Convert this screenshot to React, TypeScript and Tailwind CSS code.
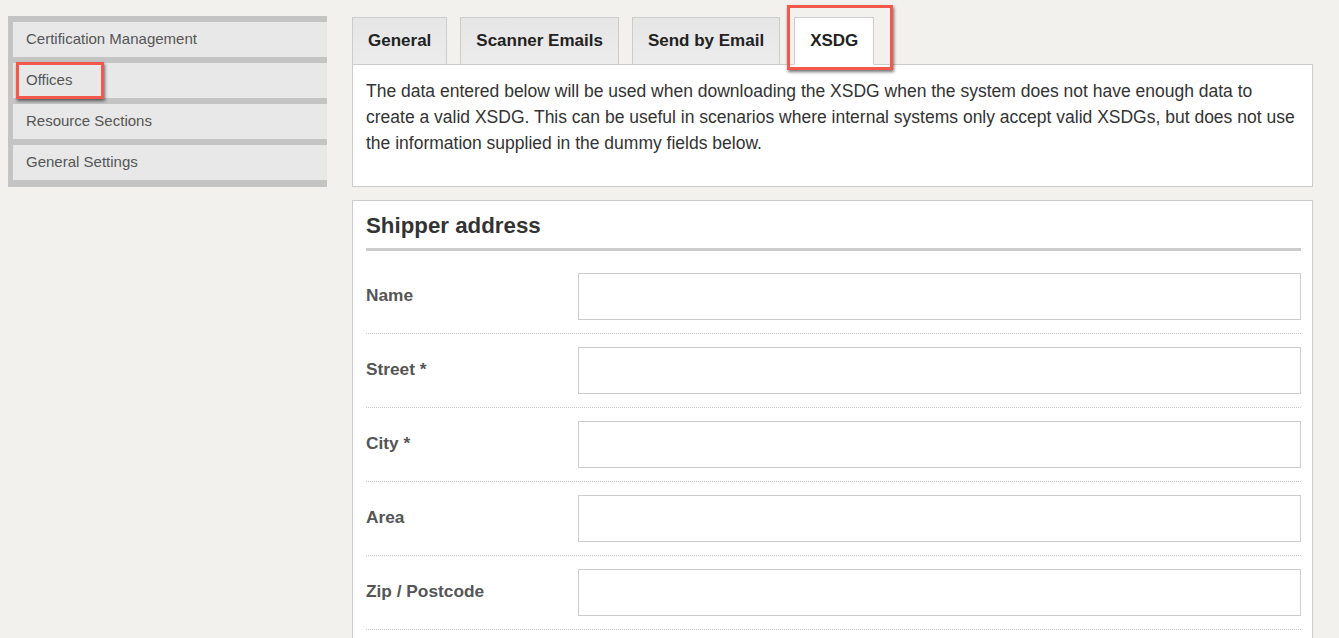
import React from "react";

const font = { fontFamily: '"Liberation Sans", Arial, sans-serif' };

const sideItems = ["Certification Management", "Offices", "Resource Sections", "General Settings"];
const tabs = ["General", "Scanner Emails", "Send by Email", "XSDG"];
const fields = [
  { label: "Name", req: false },
  { label: "Street", req: true },
  { label: "City", req: true },
  { label: "Area", req: false },
  { label: "Zip / Postcode", req: false },
];

export default function App() {
  return (
    <div
      className="w-[1339px] h-[638px] overflow-hidden bg-[#f2f1ee] flex items-start"
      style={font}
    >
      {/* Sidebar */}
      <div className="ml-2 mt-4 w-[319px] bg-[#c4c4c4] pl-[5px] pt-[6px] pb-[7px] flex flex-col gap-[6px]">
        {sideItems.map((s) => (
          <div
            key={s}
            className="relative h-[35px] bg-[#e8e8e8] pl-[13px] flex items-center text-[15px] text-[#555]"
          >
            {s}
            {s === "Offices" && (
              <div className="absolute left-[3px] top-[-1px] w-[88px] h-[37px] border-[3px] border-[#f2584c] shadow-[1px_2px_3px_rgba(0,0,0,0.55)]" />
            )}
          </div>
        ))}
      </div>

      {/* Main */}
      <div className="ml-[25px] mt-[17px] w-[961px] flex flex-col">
        {/* Tabs */}
        <div className="flex gap-[13px] h-[48px] relative z-10">
          {tabs.map((t) => {
            const active = t === "XSDG";
            return (
              <div
                key={t}
                className={
                  "relative h-[48px] px-[15px] flex items-center text-[17px] font-bold text-[#222] border border-[#ccc] " +
                  (active
                    ? "bg-white border-b-white ml-px"
                    : "bg-gradient-to-b from-[#e6e6e6] to-[#ececec]")
                }
              >
                {t}
                {active && (
                  <div className="absolute left-[-8px] top-[-13px] w-[106px] h-[65px] border-[3px] border-[#f2584c] shadow-[1px_2px_3px_rgba(0,0,0,0.55)]" />
                )}
              </div>
            );
          })}
        </div>

        {/* Intro panel */}
        <div className="-mt-px bg-white border border-[#ccc] h-[123px] pl-[13px] pr-[11px] pt-[13px] text-[17.5px] leading-[26px] text-[#333]">
          The data entered below will be used when downloading the XSDG when the system does not have enough data to
          create a valid XSDG. This can be useful in scenarios where internal systems only accept valid XSDGs, but does not use
          the information supplied in the dummy fields below.
        </div>

        {/* Shipper panel */}
        <div className="mt-[13px] bg-white border border-[#ccc] h-[460px] pl-[13px] pr-[11px] pt-[12px]">
          <div className="text-[22.3px] font-bold text-[#333] leading-[26px] pb-[9px] border-b-[3px] border-[#ccc]">
            Shipper address
          </div>
          <div className="pt-[22px] flex flex-col">
            {fields.map((f) => (
              <div key={f.label} className="flex flex-col">
                <div className="flex items-center h-[47px]">
                  <div className="w-[212px] text-[17.3px] font-bold text-[#555] -mt-[2px]">
                    {f.label}
                    {f.req && <span className="text-[#555]"> *</span>}
                  </div>
                  <div className="flex-1 h-[47px] border border-[#ccc] bg-white" />
                </div>
                <div className="mt-[13px] mb-[13px] border-b border-dotted border-[#c8c8c8]" />
              </div>
            ))}
          </div>
        </div>
      </div>
    </div>
  );
}
